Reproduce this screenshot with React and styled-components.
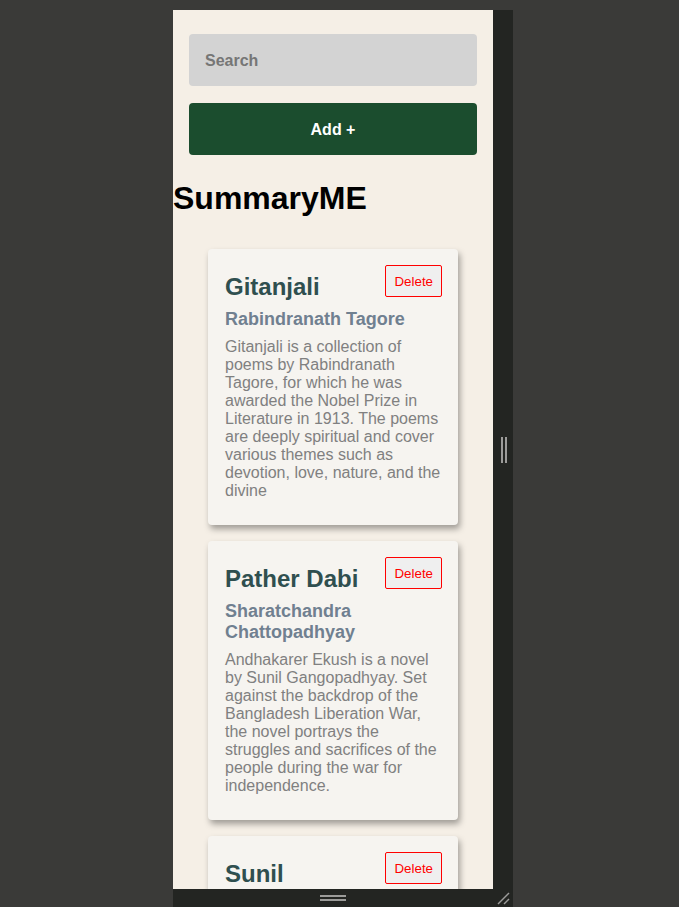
import React from 'react'
import styled, { createGlobalStyle } from 'styled-components'

const GlobalStyle = createGlobalStyle`
    html, body {
        margin: 0;
        padding: 0;
        background: #3a3a38;
        font-family: "Liberation Sans", Arial, sans-serif;
    }
`

const Desktop = styled.div`
    height: 907px;
    padding-top: 10px;
    padding-left: 173px;
    box-sizing: border-box;
    overflow: hidden;
`

const Device = styled.div`
    display: grid;
    grid-template-columns: 320px 20px;
    grid-template-rows: 879px 18px;
    width: 340px;
    background: #232522;
`

const Viewport = styled.div`
    background: #f5efe6;
    overflow: hidden;
`

const SideHandle = styled.div`
    display: flex;
    align-items: center;
    justify-content: center;
    gap: 2px;
    padding-left: 1px;

    span {
        width: 2px;
        height: 26px;
        background: #9c9c9a;
    }
`

const BottomBar = styled.div`
    grid-column: 1 / 3;
    display: flex;
    align-items: center;
    justify-content: center;
    position: relative;
    padding-right: 20px;
`

const BarLines = styled.div`
    display: flex;
    flex-direction: column;
    gap: 2px;

    span {
        width: 26px;
        height: 2px;
        background: #9c9c9a;
    }
`

const Corner = styled.svg`
    position: absolute;
    right: 3px;
    bottom: 2px;
`

const Page = styled.div`
    padding: 24px 16px 0;
`

const SearchInput = styled.input`
    display: block;
    width: 100%;
    box-sizing: border-box;
    height: 52px;
    padding: 1px 16px 0;
    border: none;
    border-radius: 4px;
    background: #d3d3d3;
    font-family: "Liberation Sans", Arial, sans-serif;
    font-size: 16px;
    font-weight: bold;
    color: #333;
    outline: none;

    &::placeholder {
        color: #767676;
    }
`

const AddButton = styled.button`
    display: block;
    width: 100%;
    height: 52px;
    margin-top: 17px;
    padding-top: 2px;
    border: none;
    border-radius: 4px;
    background: #1b4d2e;
    color: #ffffff;
    font-family: "Liberation Sans", Arial, sans-serif;
    font-size: 16px;
    font-weight: bold;
`

const Heading = styled.h1`
    margin: 25px 0 32px;
    font-size: 32px;
    font-weight: bold;
    color: #000;
`

const CardList = styled.div`
    display: flex;
    flex-direction: column;
    align-items: center;
    gap: 16px;
`

const Card = styled.div`
    width: 250px;
    box-sizing: border-box;
    padding: 16px 16px 17px 17px;
    background: #f6f4f0;
    border-radius: 4px;
    box-shadow: 2px 4px 6px rgba(0, 0, 0, 0.35);
`

const CardHeader = styled.div`
    display: flex;
    justify-content: space-between;
    align-items: flex-start;
    gap: 8px;
`

const Title = styled.h2`
    flex: 1;
    min-width: 0;
    margin: 8px 0 0;
    font-size: 24px;
    font-weight: bold;
    color: #2f4f4f;
    overflow-wrap: anywhere;
`

const DeleteButton = styled.button`
    flex-shrink: 0;
    height: 32px;
    padding: 0 8px;
    border: 1px solid #ff0000;
    border-radius: 2px;
    background: #efefef;
    color: #ff0000;
    font-family: "Liberation Sans", Arial, sans-serif;
    font-size: 13.33px;
`

const Author = styled.h3`
    margin: 8px 0 8px;
    font-size: 18px;
    font-weight: bold;
    color: #708090;
`

const Summary = styled.p`
    margin: 0 0 8px;
    font-size: 16px;
    line-height: 18px;
    color: #808080;
`

const books = [
    {
        title: 'Gitanjali',
        author: 'Rabindranath Tagore',
        summary:
            'Gitanjali is a collection of poems by Rabindranath Tagore, for which he was awarded the Nobel Prize in Literature in 1913. The poems are deeply spiritual and cover various themes such as devotion, love, nature, and the divine',
    },
    {
        title: 'Pather Dabi',
        author: 'Sharatchandra Chattopadhyay',
        summary:
            'Andhakarer Ekush is a novel by Sunil Gangopadhyay. Set against the backdrop of the Bangladesh Liberation War, the novel portrays the struggles and sacrifices of the people during the war for independence.',
    },
    {
        title: 'Sunil Gangopadhyay',
        author: 'Sunil Gangopadhyay',
        summary: 'A novel by Sunil Gangopadhyay.',
    },
]

function BookCard({ book }) {
    return (
        <Card>
            <CardHeader>
                <Title>{book.title}</Title>
                <DeleteButton>Delete</DeleteButton>
            </CardHeader>
            <Author>{book.author}</Author>
            <Summary>{book.summary}</Summary>
        </Card>
    )
}

export default function App() {
    return (
        <>
            <GlobalStyle />
            <Desktop>
                <Device>
                    <Viewport>
                        <Page>
                            <SearchInput placeholder="Search" />
                            <AddButton>Add +</AddButton>
                        </Page>
                        <Heading>SummaryME</Heading>
                        <CardList>
                            {books.map((book) => (
                                <BookCard key={book.title} book={book} />
                            ))}
                        </CardList>
                    </Viewport>
                    <SideHandle>
                        <span />
                        <span />
                    </SideHandle>
                    <BottomBar>
                        <BarLines>
                            <span />
                            <span />
                        </BarLines>
                        <Corner width="14" height="14" viewBox="0 0 14 14">
                            <line x1="2" y1="13" x2="13" y2="2" stroke="#9c9c9a" strokeWidth="1.5" />
                            <line x1="8" y1="13" x2="13" y2="8" stroke="#9c9c9a" strokeWidth="1.5" />
                        </Corner>
                    </BottomBar>
                </Device>
            </Desktop>
        </>
    )
}
